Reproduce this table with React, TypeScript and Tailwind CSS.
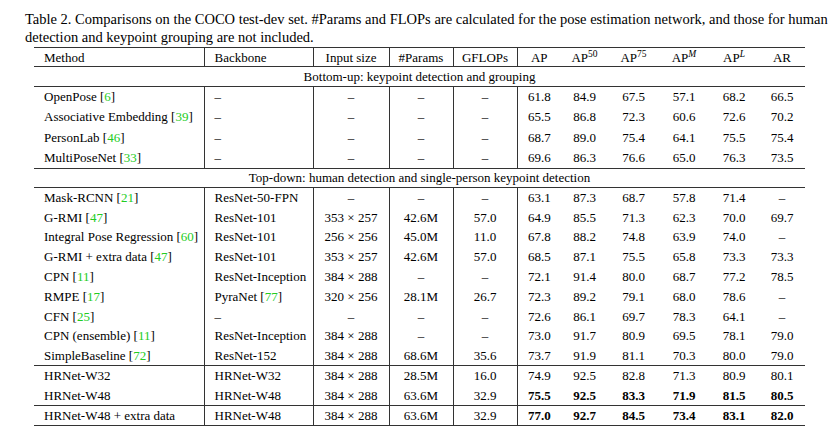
type Row = {
  method: string;
  cite?: string;
  backbone: string;
  bcite?: string;
  input: string;
  params: string;
  gflops: string;
  vals: string[];
  bold?: boolean;
};

const D = "–";

const bottomUp: Row[] = [
  { method: "OpenPose", cite: "6", backbone: D, input: D, params: D, gflops: D, vals: ["61.8", "84.9", "67.5", "57.1", "68.2", "66.5"] },
  { method: "Associative Embedding", cite: "39", backbone: D, input: D, params: D, gflops: D, vals: ["65.5", "86.8", "72.3", "60.6", "72.6", "70.2"] },
  { method: "PersonLab", cite: "46", backbone: D, input: D, params: D, gflops: D, vals: ["68.7", "89.0", "75.4", "64.1", "75.5", "75.4"] },
  { method: "MultiPoseNet", cite: "33", backbone: D, input: D, params: D, gflops: D, vals: ["69.6", "86.3", "76.6", "65.0", "76.3", "73.5"] },
];

const topDown: Row[] = [
  { method: "Mask-RCNN", cite: "21", backbone: "ResNet-50-FPN", input: D, params: D, gflops: D, vals: ["63.1", "87.3", "68.7", "57.8", "71.4", D] },
  { method: "G-RMI", cite: "47", backbone: "ResNet-101", input: "353 × 257", params: "42.6M", gflops: "57.0", vals: ["64.9", "85.5", "71.3", "62.3", "70.0", "69.7"] },
  { method: "Integral Pose Regression", cite: "60", backbone: "ResNet-101", input: "256 × 256", params: "45.0M", gflops: "11.0", vals: ["67.8", "88.2", "74.8", "63.9", "74.0", D] },
  { method: "G-RMI + extra data", cite: "47", backbone: "ResNet-101", input: "353 × 257", params: "42.6M", gflops: "57.0", vals: ["68.5", "87.1", "75.5", "65.8", "73.3", "73.3"] },
  { method: "CPN", cite: "11", backbone: "ResNet-Inception", input: "384 × 288", params: D, gflops: D, vals: ["72.1", "91.4", "80.0", "68.7", "77.2", "78.5"] },
  { method: "RMPE", cite: "17", backbone: "PyraNet", bcite: "77", input: "320 × 256", params: "28.1M", gflops: "26.7", vals: ["72.3", "89.2", "79.1", "68.0", "78.6", D] },
  { method: "CFN", cite: "25", backbone: D, input: D, params: D, gflops: D, vals: ["72.6", "86.1", "69.7", "78.3", "64.1", D] },
  { method: "CPN (ensemble)", cite: "11", backbone: "ResNet-Inception", input: "384 × 288", params: D, gflops: D, vals: ["73.0", "91.7", "80.9", "69.5", "78.1", "79.0"] },
  { method: "SimpleBaseline", cite: "72", backbone: "ResNet-152", input: "384 × 288", params: "68.6M", gflops: "35.6", vals: ["73.7", "91.9", "81.1", "70.3", "80.0", "79.0"] },
];

const ours: Row[] = [
  { method: "HRNet-W32", backbone: "HRNet-W32", input: "384 × 288", params: "28.5M", gflops: "16.0", vals: ["74.9", "92.5", "82.8", "71.3", "80.9", "80.1"] },
  { method: "HRNet-W48", backbone: "HRNet-W48", input: "384 × 288", params: "63.6M", gflops: "32.9", vals: ["75.5", "92.5", "83.3", "71.9", "81.5", "80.5"], bold: true },
];

const extra: Row[] = [
  { method: "HRNet-W48 + extra data", backbone: "HRNet-W48", input: "384 × 288", params: "63.6M", gflops: "32.9", vals: ["77.0", "92.7", "84.5", "73.4", "83.1", "82.0"], bold: true },
];

function Cite({ n }: { n?: string }) {
  if (!n) return null;
  return (
    <>
      {" "}[<span className="text-[#22cc22]">{n}</span>]
    </>
  );
}

function DataRow({ r, ruleTop, tall }: { r: Row; ruleTop?: boolean; tall?: boolean }) {
  const t = ruleTop ? "border-t border-t-[#333]" : "";
  return (
    <tr className={tall ? "h-[20.5px]" : "h-[19.8px]"}>
      <td className={`pl-[10px] border-r border-r-[#333] ${t}`}>
        {r.method}
        <Cite n={r.cite} />
      </td>
      <td className={`pl-[10px] border-r border-r-[#333] ${t}`}>
        {r.backbone}
        <Cite n={r.bcite} />
      </td>
      <td className={`text-center border-r border-r-[#333] ${t}`}>{r.input}</td>
      <td className={`text-center border-r border-r-[#333] ${t}`}>{r.params}</td>
      <td className={`text-center border-r border-r-[#333] ${t}`}>{r.gflops}</td>
      {r.vals.map((v, i) => (
        <td key={i} className={`text-center ${r.bold ? "font-bold" : ""} ${t}`}>
          {v}
        </td>
      ))}
    </tr>
  );
}

function GroupRow({ label }: { label: string }) {
  return (
    <tr className="h-[19.5px]">
      <td colSpan={11} className="text-center border-y border-y-[#333]">
        {label}
      </td>
    </tr>
  );
}

export default function App() {
  return (
    <main className="w-[834px] h-[446px] bg-white text-black font-['Liberation_Serif',serif] overflow-hidden">
      <div className="pl-[25px] pt-[10px] text-[14.5px] leading-[18px]">
        <div className="whitespace-nowrap">
          Table 2. Comparisons on the COCO test-dev set. #Params and FLOPs are calculated for the pose estimation network, and those for human
        </div>
        <div className="whitespace-nowrap">detection and keypoint grouping are not included.</div>
      </div>

      <table className="ml-[34px] mt-[1px] w-[771px] table-fixed border-collapse text-[13px] leading-none border-y border-y-[#333]">
        <colgroup>
          <col className="w-[170px]" />
          <col className="w-[109px]" />
          <col className="w-[76px]" />
          <col className="w-[64px]" />
          <col className="w-[64px]" />
          <col className="w-[44px]" />
          <col className="w-[47px]" />
          <col className="w-[51px]" />
          <col className="w-[50px]" />
          <col className="w-[50px]" />
          <col className="w-[46px]" />
        </colgroup>
        <thead>
          <tr className="h-[19px]">
            <th className="pl-[10px] text-left font-normal border-r border-r-[#333]">Method</th>
            <th className="pl-[10px] text-left font-normal border-r border-r-[#333]">Backbone</th>
            <th className="text-center font-normal border-r border-r-[#333]">Input size</th>
            <th className="text-center font-normal border-r border-r-[#333]">#Params</th>
            <th className="text-center font-normal border-r border-r-[#333]">GFLOPs</th>
            <th className="text-center font-normal">AP</th>
            <th className="text-center font-normal">
              AP<sup className="text-[9.5px]">50</sup>
            </th>
            <th className="text-center font-normal">
              AP<sup className="text-[9.5px]">75</sup>
            </th>
            <th className="text-center font-normal">
              AP<sup className="text-[9.5px] italic">M</sup>
            </th>
            <th className="text-center font-normal">
              AP<sup className="text-[9.5px] italic">L</sup>
            </th>
            <th className="text-center font-normal">AR</th>
          </tr>
        </thead>
        <tbody>
          <GroupRow label="Bottom-up: keypoint detection and grouping" />
          {bottomUp.map((r) => (
            <DataRow key={r.method} r={r} tall />
          ))}
          <GroupRow label="Top-down: human detection and single-person keypoint detection" />
          {topDown.map((r) => (
            <DataRow key={r.method} r={r} />
          ))}
          {ours.map((r, i) => (
            <DataRow key={r.method} r={r} ruleTop={i === 0} />
          ))}
          {extra.map((r) => (
            <DataRow key={r.method} r={r} ruleTop tall />
          ))}
        </tbody>
      </table>
    </main>
  );
}
